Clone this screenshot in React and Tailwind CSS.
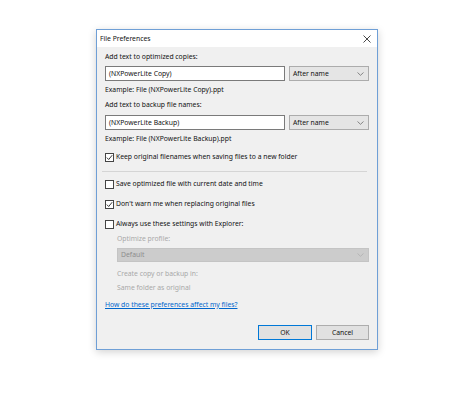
import React from "react";

const Chevron = ({ color = "#6d6d6d" }) => (
  <svg width="7" height="4" viewBox="0 0 7 4" fill="none">
    <path d="M0.5 0.5 L3.5 3.3 L6.5 0.5" stroke={color} strokeWidth="0.8" />
  </svg>
);

const Check = ({ checked, label }) => (
  <div className="flex items-center h-[10px]">
    <div className="w-[9px] h-[9px] border border-[#444] bg-white flex items-center justify-center shrink-0">
      {checked && (
        <svg width="7" height="7" viewBox="0 0 7 7" fill="none">
          <path d="M0.8 3.6 L2.7 5.5 L6.2 1.2" stroke="#222" strokeWidth="0.9" />
        </svg>
      )}
    </div>
    <span className="ml-[2px] text-[#111]">{label}</span>
  </div>
);

export default function App() {
  return (
    <div className="w-[474px] h-[395px] bg-white" style={{ fontFamily: '"Noto Sans", "Open Sans", sans-serif' }}>
      <div className="pt-[29px] pl-[96px]">
        <div className="w-[282px] h-[321px] border border-[#6f9fd6] bg-[#f0f0f0] shadow-[0_2px_8px_rgba(0,0,0,0.18)] flex flex-col text-[6.8px] leading-[10px]">
          <div className="h-[17px] bg-white flex items-center justify-between pl-[3px] pr-[6px] text-[#111]">
            <span>File Preferences</span>
            <svg width="8" height="8" viewBox="0 0 8 8" fill="none">
              <path d="M0.5 0.5 L7.5 7.5 M7.5 0.5 L0.5 7.5" stroke="#333" strokeWidth="0.9" />
            </svg>
          </div>
          <div className="pl-[8px] pr-[8px] pt-[5px] flex flex-col">
            <div className="h-[10px] text-[#111]">Add text to optimized copies:</div>
            <div className="mt-[4px] flex h-[15px]">
              <div className="w-[180px] h-full bg-white border border-[#7a7a7a] flex items-center pl-[3px] text-[#111]">(NXPowerLite Copy)</div>
              <div className="ml-[4px] w-[80px] h-full bg-[#e5e5e5] border border-[#acacac] flex items-center justify-between pl-[3px] pr-[4px] text-[#111]">
                <span>After name</span>
                <Chevron />
              </div>
            </div>
            <div className="mt-[4px] h-[10px] text-[#111]">Example: File (NXPowerLite Copy).ppt</div>
            <div className="mt-[5px] h-[10px] text-[#111]">Add text to backup file names:</div>
            <div className="mt-[5px] flex h-[15px]">
              <div className="w-[180px] h-full bg-white border border-[#7a7a7a] flex items-center pl-[3px] text-[#111]">(NXPowerLite Backup)</div>
              <div className="ml-[4px] w-[80px] h-full bg-[#e5e5e5] border border-[#acacac] flex items-center justify-between pl-[3px] pr-[4px] text-[#111]">
                <span>After name</span>
                <Chevron />
              </div>
            </div>
            <div className="mt-[4px] h-[10px] text-[#111]">Example: File (NXPowerLite Backup).ppt</div>
            <div className="mt-[8px]">
              <Check checked label="Keep original filenames when saving files to a new folder" />
            </div>
            <div className="mt-[9px] h-px bg-[#d5d5d5] ml-[-3px] mr-[2px]" />
            <div className="mt-[7px]">
              <Check label="Save optimized file with current date and time" />
            </div>
            <div className="mt-[10px]">
              <Check checked label="Don't warn me when replacing original files" />
            </div>
            <div className="mt-[10px]">
              <Check label="Always use these settings with Explorer:" />
            </div>
            <div className="pl-[12px] flex flex-col">
              <div className="mt-[5px] h-[10px] text-[#a8a8a8]">Optimize profile:</div>
              <div className="mt-[4px] h-[14px] bg-[#cccccc] border border-[#c4c4c4] flex items-center justify-between pl-[3px] pr-[4px] text-[#8c8c8c]">
                <span>Default</span>
                <Chevron color="#b0b0b0" />
              </div>
              <div className="mt-[7px] h-[10px] text-[#a8a8a8]">Create copy or backup in:</div>
              <div className="mt-[4px] h-[10px] text-[#a8a8a8]">Same folder as original</div>
            </div>
            <div className="mt-[7px] h-[10px] text-[#0066cc] underline">How do these preferences affect my files?</div>
            <div className="mt-[15px] flex justify-end h-[15px]">
              <div className="w-[54px] h-full bg-[#e1e1e1] border border-[#0078d7] flex items-center justify-center text-[#111]">OK</div>
              <div className="ml-[4px] w-[53px] h-full bg-[#e1e1e1] border border-[#adadad] flex items-center justify-center text-[#111]">Cancel</div>
            </div>
          </div>
        </div>
      </div>
    </div>
  );
}
